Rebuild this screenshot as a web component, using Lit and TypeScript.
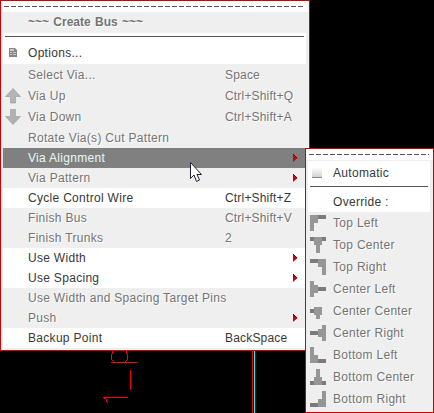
import { LitElement, html, css, svg } from "lit";
import { customElement } from "lit/decorators.js";
import { classMap } from "lit/directives/class-map.js";

interface Item {
  label: string;
  key?: string;
  on?: boolean;
  active?: boolean;
  sub?: boolean;
  icon?: "form" | "up" | "down";
  tall?: boolean;
}

const items: Item[] = [
  { label: "Select Via...", key: "Space", tall: true },
  { label: "Via Up", key: "Ctrl+Shift+Q", icon: "up", tall: true },
  { label: "Via Down", key: "Ctrl+Shift+A", icon: "down", tall: true },
  { label: "Rotate Via(s) Cut Pattern", tall: true },
  { label: "Via Alignment", active: true, sub: true },
  { label: "Via Pattern", sub: true },
  { label: "Cycle Control Wire", key: "Ctrl+Shift+Z", on: true },
  { label: "Finish Bus", key: "Ctrl+Shift+V" },
  { label: "Finish Trunks", key: "2" },
  { label: "Use Width", on: true, sub: true },
  { label: "Use Spacing", on: true, sub: true },
  { label: "Use Width and Spacing Target Pins" },
  { label: "Push", sub: true },
  { label: "Backup Point", key: "BackSpace", on: true },
];

/* Each alignment glyph: light blocks, then dark blocks, as path data. */
const aligns: [string, string, string][] = [
  ["Top Left", "M0 0h8v8h-4v8h-4z", "M8 0h8v4h-8z"],
  ["Top Center", "M4 0h8v8h-2v8h-4v-8h-2z", "M0 0h4v4h-4zM12 0h4v4h-4z"],
  ["Top Right", "M8 0h8v16h-4v-8h-4z", "M0 0h8v4h-8z"],
  ["Center Left", "M0 0h4v4h4v8h-4v4h-4z", "M8 6h8v4h-8z"],
  ["Center Center", "M4 4h8v8h-2v4h-4v-4h-2z", "M0 6h4v4h-4z"],
  ["Center Right", "M12 0h4v16h-4v-4h-4v-8h4z", "M0 6h8v4h-8z"],
  ["Bottom Left", "M0 0h4v8h4v8h-8z", "M8 12h8v4h-8z"],
  ["Bottom Center", "M6 0h4v8h2v8h-8v-8h2z", "M0 12h4v4h-4zM12 12h4v4h-4z"],
  ["Bottom Right", "M12 0h4v16h-8v-8h4z", "M0 12h8v4h-8z"],
];

const icons = {
  form: svg`<path fill="#858585" d="M4 3h6l2 2v7H4z"/><path fill="#ccc" d="M5 4h4v2h-4zM5 7h2v1h-2zM8 7h3v1h-3zM5 9h2v1h-2zM8 9h3v1h-3z"/>`,
  up: svg`<path fill="#b4b4b4" stroke="#a0a0a0" stroke-width=".7" d="M8 .5L15.500 8.500H10.500V15H5.500V8.500H.5z"/>`,
  down: svg`<path fill="#b0b0b0" stroke="#a0a0a0" stroke-width=".7" d="M8 15.500L15.500 7.500H10.500V.5H5.500V7.500H.5z"/>`,
};

@customElement("app-root")
export class AppRoot extends LitElement {
  static styles = css`
    :host { display: block; position: relative; width: 434px; height: 413px; overflow: hidden; background: #000;
      font: 12px/20px "Liberation Sans", Arial, sans-serif; letter-spacing: 0.3px; color: #383838; }
    * { box-sizing: border-box; }
    svg { display: block; }
    .wires { position: absolute; left: 0; top: 0; }
    .menu { position: absolute; border: 1px solid #d00000; background: #efefef; }
    .main { left: 0; top: 0; width: 310px; height: 351px; }
    .side { left: 305px; top: 148px; width: 129px; height: 265px; }
    .tear { height: 11px; margin: 0 1px 0 2px; background: #fff; padding: 5px 4px 0 1px; }
    .dash { height: 1px; background: repeating-linear-gradient(90deg, #555 0 5px, transparent 5px 7px); }
    .title { height: 21px; padding-left: 27px; line-height: 21px; font-weight: bold; letter-spacing: 0; word-spacing: 1px;
      color: #747474; text-shadow: 1px 1px #fff; }
    .white { margin: 0 3px 0 2px; background: #fff; }
    .rule { height: 1px; background: #555; }
    .main .rule { margin: 0 2px; }
    .first { height: 31px; padding-top: 3px; }
    .row { display: grid; grid-template-columns: 25px 197px 1fr 13px; align-items: center; height: 20px;
      margin: 0 3px 0 2px; color: #747474; text-shadow: 1px 1px #fff; white-space: pre; }
    .first .row { margin: 6px 0 0; }
    .tall { height: 21px; }
    .on { color: #383838; background: #fff; text-shadow: none; }
    .active { color: #e6fafa; background: #808080; text-shadow: none; }
    .key { letter-spacing: 0.18px; }
    .ico { width: 16px; height: 16px; margin-left: 2px; }
    .side .tear { margin: 0 0 0 1px; padding: 5px 4px 0 2px; }
    .side .white { margin: 1px 3px 0 2px; height: 51px; padding: 0 2px; }
    .auto { display: flex; align-items: center; height: 25px; padding: 0 0 2px 2px; gap: 11px; }
    .box { width: 10px; height: 10px; background: linear-gradient(#fbfbfb, #d2d2d2); border-bottom: 1px solid #888; }
    .over { height: 25px; line-height: 31px; padding-left: 23px; }
    .align { display: flex; align-items: center; gap: 7px; height: 22px; padding-left: 4px; color: #747474;
      text-shadow: 1px 1px #fff; white-space: pre; }
    .cursor { position: absolute; left: 190px; top: 162px; }
  `;

  row(i: Item) {
    return html`<div class=${classMap({ row: true, on: !!i.on, active: !!i.active, tall: !!i.tall })}>
      <span class="ico">${i.icon ? html`<svg width="16" height="16">${icons[i.icon]}</svg>` : ""}</span>
      <span>${i.label}</span><span class="key">${i.key ?? ""}</span>
      ${i.sub ? html`<svg width="5" height="8"><path d="M0 0L4.500 4L0 8z" fill="#d00000"/><path d="M0 0L4 4" stroke="#600"/></svg>` : ""}
    </div>`;
  }

  render() {
    return html`
      <svg class="wires" width="434" height="413" fill="none" stroke="#f00" shape-rendering="crispEdges">
        <path d="M112.500 350v3l-1 2v4l2 3M126.500 350v3l1 2v4l-2 3M111 362.500h26M130.500 370v20M103 397.500h25M103 397l3 2 1.500 4M252.500 350v63"/>
        <path stroke="#0ff" d="M254.500 350v63"/>
      </svg>
      <div class="menu main">
        <div class="tear"><div class="dash"></div></div>
        <div class="title">~~~ Create Bus ~~~</div>
        <div class="white first"><div class="rule"></div>
          ${this.row({ label: "Options...", on: true, icon: "form" })}
        </div>
        ${items.map((i) => this.row(i))}
      </div>
      <div class="menu side">
        <div class="tear"><div class="dash"></div></div>
        <div class="white">
          <div class="auto"><span class="box"></span><span>Automatic</span></div>
          <div class="rule"></div>
          <div class="over">Override :</div>
        </div>
        ${aligns.map(([label, light, dark]) => html`<div class="align">
          <svg width="16" height="16" shape-rendering="crispEdges"><path fill="#969696" d=${light}/><path fill="#7b7b7b" d=${dark}/></svg>
          <span>${label}</span></div>`)}
      </div>
      <svg class="cursor" width="14" height="21"><path d="M.5.5V16.500L4 13L6.500 19.500L9.500 18L7 12.500H11.500z" fill="#fff" stroke="#223"/></svg>
    `;
  }
}
